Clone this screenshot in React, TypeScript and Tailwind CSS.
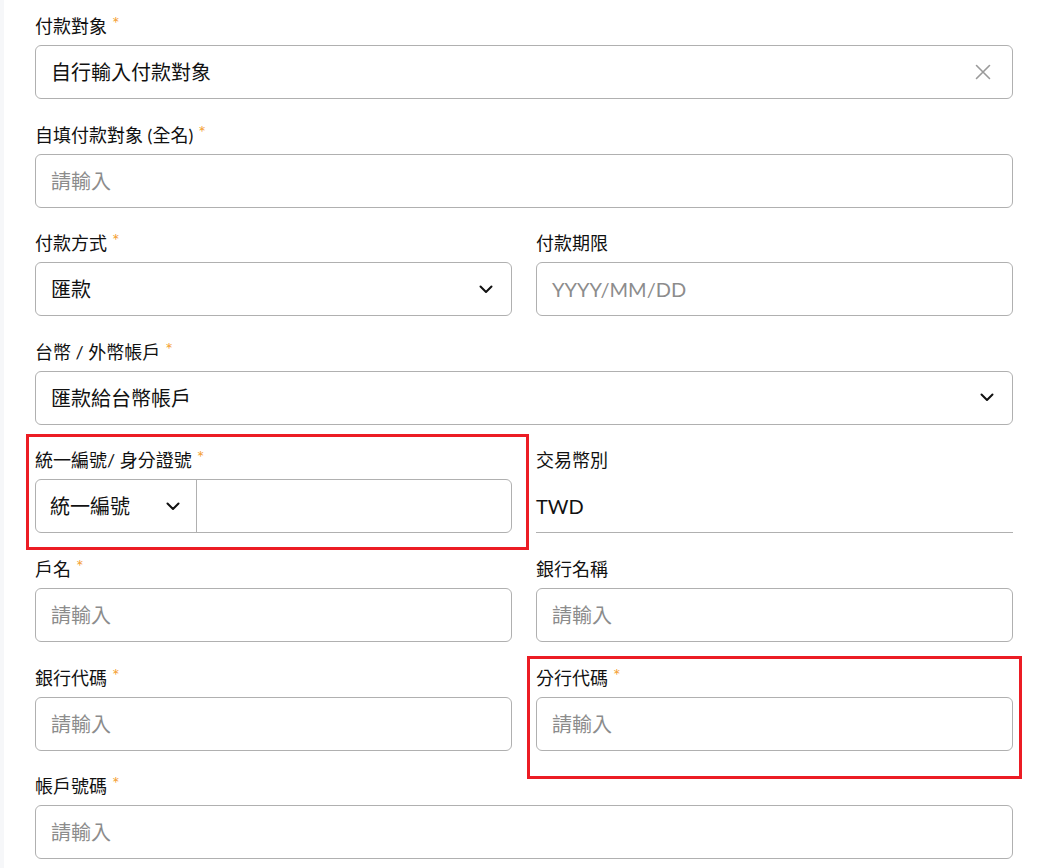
import React from "react";

const FONT = "font-['Lato','Noto_Sans_CJK_TC',sans-serif]";

function Chevron() {
  return (
    <svg width="14" height="9" viewBox="0 0 14 9" fill="none" className="shrink-0">
      <path d="M1.5 1.5 L7 7 L12.5 1.5" stroke="#111111" strokeWidth="2" strokeLinecap="round" strokeLinejoin="round" />
    </svg>
  );
}

function XIcon() {
  return (
    <svg width="16" height="16" viewBox="0 0 16 16" fill="none" className="shrink-0">
      <path d="M1.5 1.5 L14.5 14.5 M14.5 1.5 L1.5 14.5" stroke="#9a9a9a" strokeWidth="1.6" strokeLinecap="round" />
    </svg>
  );
}

function Label({ text, req }: { text: string; req?: boolean }) {
  return (
    <div className="h-6 leading-6 text-[18px] text-[#111111] mb-[7px] whitespace-nowrap">
      {text}
      {req && <span className="text-[#f4a033] ml-[5px] text-[18px] relative top-[-3px]">*</span>}
    </div>
  );
}

const box = "h-[54px] border border-[#b0b0b0] rounded-[6px] bg-white flex items-center";

function Input({ placeholder = "請輸入" }: { placeholder?: string }) {
  return (
    <div className={`${box} px-[15px]`}>
      <span className="text-[20px] text-[#8c8c8c]">{placeholder}</span>
    </div>
  );
}

function Select({ value }: { value: string }) {
  return (
    <div className={`${box} pl-[15px] pr-[18px] justify-between`}>
      <span className="text-[20px] text-[#111111]">{value}</span>
      <Chevron />
    </div>
  );
}

function Field({ children }: { children: React.ReactNode }) {
  return <div className="mb-[23.6px]">{children}</div>;
}

export default function App() {
  return (
    <div className={`${FONT} w-[1037px] h-[868px] flex bg-white overflow-hidden`}>
      <div className="w-[4px] bg-[#f6f7f9] shrink-0" />
      <div className="relative flex-1 pl-[31px] pr-[24px] pt-[14px]">
        <Field>
          <Label text="付款對象" req />
          <div className={`${box} pl-[15px] pr-[21px] justify-between`}>
            <span className="text-[20px] text-[#111111]">自行輸入付款對象</span>
            <XIcon />
          </div>
        </Field>
        <Field>
          <Label text="自填付款對象 (全名)" req />
          <Input />
        </Field>
        <div className="grid grid-cols-2 gap-x-6">
          <Field>
            <Label text="付款方式" req />
            <Select value="匯款" />
          </Field>
          <Field>
            <Label text="付款期限" />
            <Input placeholder="YYYY/MM/DD" />
          </Field>
        </div>
        <Field>
          <Label text="台幣 / 外幣帳戶" req />
          <Select value="匯款給台幣帳戶" />
        </Field>
        <div className="grid grid-cols-2 gap-x-6">
          <Field>
            <Label text="統一編號/ 身分證號" req />
            <div className="h-[54px] border border-[#b0b0b0] rounded-[6px] bg-white flex">
              <div className="w-[161px] border-r border-[#b0b0b0] flex items-center justify-between pl-[14px] pr-[16px]">
                <span className="text-[20px] text-[#111111]">統一編號</span>
                <Chevron />
              </div>
              <div className="flex-1" />
            </div>
          </Field>
          <Field>
            <Label text="交易幣別" />
            <div className="h-[54px] border-b border-[#b0b0b0] flex items-center">
              <span className="text-[20px] text-[#111111]">TWD</span>
            </div>
          </Field>
          <Field>
            <Label text="戶名" req />
            <Input />
          </Field>
          <Field>
            <Label text="銀行名稱" />
            <Input />
          </Field>
          <Field>
            <Label text="銀行代碼" req />
            <Input />
          </Field>
          <Field>
            <Label text="分行代碼" req />
            <Input />
          </Field>
        </div>
        <Field>
          <Label text="帳戶號碼" req />
          <Input />
        </Field>

        <div className="absolute left-[22px] top-[434px] w-[503px] h-[116px] border-[3px] border-[#ec1c24]" />
        <div className="absolute left-[523px] top-[656px] w-[495px] h-[123px] border-[3px] border-[#ec1c24]" />
      </div>
    </div>
  );
}
